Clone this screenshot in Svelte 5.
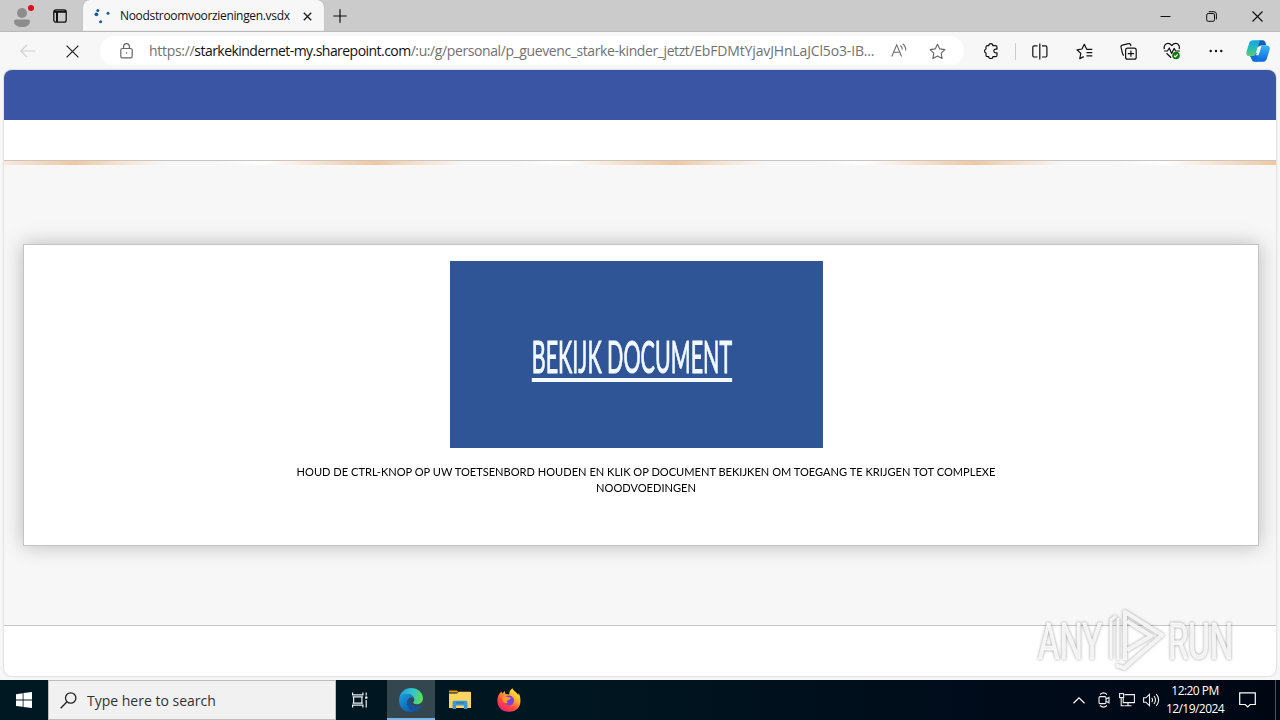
<script>
  const captions = [
    'HOUD DE CTRL-KNOP OP UW TOETSENBORD HOUDEN EN KLIK OP DOCUMENT BEKIJKEN OM TOEGANG TE KRIJGEN TOT COMPLEXE',
    'NOODVOEDINGEN'
  ];
</script>

<div class="screen">
  <header class="titlebar">
    <div class="profile">
      <svg width="36" height="32" viewBox="0 0 36 32">
        <circle cx="18" cy="13" r="5" fill="#8c8c8c" />
        <path d="M10 21.500a2 2 0 0 1 2-2h12a2 2 0 0 1 2 2c0 3.500-3.500 5.500-8 5.500s-8-2-8-5.500z" fill="#8c8c8c" />
        <circle cx="27" cy="8" r="3" fill="#e00b1c" />
      </svg>
    </div>
    <div class="workspaces">
      <svg width="14" height="14" viewBox="0 0 14 14" fill="none" stroke="#111" stroke-width="1.300">
        <rect x=".8" y=".8" width="12.400" height="12.400" rx="2.200" />
        <path d="M1 2.800h12M4 3.500V13" stroke-width="2" />
      </svg>
    </div>
    <div class="tab">
      <svg class="spinner" width="17" height="16" viewBox="0 0 17 16" fill="#1d5b9e">
        <circle cx="3.800" cy="2.600" r="1.500" /><circle cx="2.400" cy="6.300" r="1.900" />
        <circle cx="6.600" cy="13.800" r="1.500" /><circle cx="14" cy="5.200" r="1.500" />
      </svg>
      <span class="tab-title">Noodstroomvoorzieningen.vsdx</span>
      <svg class="tab-close" width="9" height="9" viewBox="0 0 9 9" stroke="#222" stroke-width="1.400"><path d="M.8.8l7.400 7.400M8.200.8L.8 8.200" /></svg>
    </div>
    <svg class="newtab" width="14" height="14" viewBox="0 0 14 14" stroke="#111" stroke-width="1.200"><path d="M.3 7h13.400M7 .3v13.400" /></svg>
    <div class="window-controls">
      <span><svg width="11" height="11" viewBox="0 0 11 11" stroke="#111"><path d="M.5 5.500h10" /></svg></span>
      <span><svg width="11" height="11" viewBox="0 0 11 11" fill="none" stroke="#111"><rect x=".7" y="2.500" width="7.800" height="7.800" rx="1.500" /><path d="M2.700.7h5.200a2.500 2.500 0 0 1 2.500 2.500v5.200" /></svg></span>
      <span><svg width="11" height="11" viewBox="0 0 11 11" stroke="#111" stroke-width="1.200"><path d="M.5.5l10 10M10.500.5l-10 10" /></svg></span>
    </div>
  </header>

  <div class="toolbar">
    <svg class="back" width="16" height="14" viewBox="0 0 16 14" fill="none" stroke="#cfcfcf" stroke-width="1.200"><path d="M.8 7h14.700M7 .8L.8 7 7 13.200" /></svg>
    <svg class="stop" width="13" height="13" viewBox="0 0 13 13" stroke="#222" stroke-width="1.200"><path d="M.6.6l11.800 11.800M12.400.6L.6 12.400" /></svg>
    <div class="address">
      <svg class="lock" width="13" height="16" viewBox="0 0 13 16" fill="none" stroke="#666" stroke-width="1.200">
        <rect x=".8" y="5.500" width="11.400" height="9.300" rx="1.600" /><path d="M3.600 5.500V3.600a2.900 2.900 0 0 1 5.800 0v1.900" /><circle cx="6.500" cy="10" r=".8" fill="#666" stroke="none" />
      </svg>
      <div class="url"><span class="u1">https://</span><span class="u2">starkekindernet-my.sharepoint.com</span><span class="u3">/:u:/g/personal/p_guevenc_starke-kinder_jetzt/</span><span class="u4">EbFDMtYjavJHnLaJCl5o3-IB...</span></div>
      <svg class="read" width="17" height="15" viewBox="0 0 17 15" fill="none" stroke="#6c6c6c" stroke-width="1.100">
        <path d="M.8 13.500L5.700 1.800l4.900 11.700M2.600 9.300h6.200M9.300 2.500c1.500 1 2 2.400 2 4M11.700.8c2.200 1.700 3.200 4 3 6.700" />
      </svg>
      <svg class="star" width="17" height="17" viewBox="0 0 17 17" fill="none" stroke="#666" stroke-width="1.100" stroke-linejoin="round">
        <path d="M8.500 1.200l2.300 4.700 5.100.7-3.700 3.600.9 5.200-4.600-2.400-4.600 2.400.9-5.200L1.100 6.600l5.100-.7z" />
      </svg>
    </div>
    <span class="tool">
      <svg width="16" height="16" viewBox="0 0 16 16" fill="none" stroke="#111" stroke-width="1.200" stroke-linejoin="round">
        <path d="M5.700 2.700a2.100 2.100 0 0 1 4.200 0h2.600q1.500 0 1.500 1.500v1.900h-1.300a1.900 1.900 0 0 0 0 3.800H14v2.300q0 1.500-1.500 1.500H9.900a2.100 1.900 0 0 1-4.200 0H4.500q-1.500 0-1.500-1.500V10a2.100 2.100 0 0 1 0-4V4.200q0-1.500 1.500-1.500z" />
      </svg>
    </span>
    <i class="divider"></i>
    <span class="tool">
      <svg width="16" height="17" viewBox="0 0 16 17" fill="none" stroke="#111" stroke-width="1.200">
        <path d="M7.800.6v15.800M5.500 2.800H2.300A1.500 1.500 0 0 0 .8 4.300v8.200A1.500 1.500 0 0 0 2.300 14h3.200M10 2.800h3.400a1.500 1.500 0 0 1 1.500 1.500v8.200a1.500 1.500 0 0 1-1.500 1.500H10" />
      </svg>
    </span>
    <span class="tool">
      <svg width="17" height="17" viewBox="0 0 17 17" fill="none" stroke="#111" stroke-width="1.200" stroke-linejoin="round">
        <path d="M16.300 6.300h-5.600L8.300 1.300 6 6 1 6.800l3.800 3.600-1 5.200 4-2M10.500 9.600h5.800M10.500 12.900h5.800" />
      </svg>
    </span>
    <span class="tool">
      <svg width="17" height="17" viewBox="0 0 17 17" fill="none" stroke="#111" stroke-width="1.200">
        <path d="M4 12.300A1.800 1.800 0 0 1 2.600 10.900L1 4.200A1.800 1.800 0 0 1 2.300 2.100L8.700.7a1.700 1.700 0 0 1 2 1.300l.2 1.200" /><rect x="5.600" y="5.200" width="10.600" height="11" rx="2" /><path d="M10.900 7.500v6.300M7.800 10.700h6.200" />
      </svg>
    </span>
    <span class="tool">
      <svg width="18" height="18" viewBox="0 0 18 18" fill="none" stroke="#111" stroke-width="1.200" stroke-linejoin="round">
        <path d="M1.300 7.200C.5 3.500 2.800 1.400 5 1.400c1.700 0 2.900 1 3.800 2.200C9.700 2.400 11 1.400 12.700 1.400c2.600 0 4.400 2.600 3.500 5.800M1 9h3.400l1.900-3 2.300 5.400 2.500-5 1.500 2.600h4.300M3.500 11.300l4.700 4.500" />
        <circle cx="13" cy="13.500" r="3.800" fill="#107c10" stroke="none" /><path d="M11.200 13.700l1.200 1.100 2.300-2.500" stroke="#fff" />
      </svg>
    </span>
    <span class="tool"><svg width="14" height="4" viewBox="0 0 14 4" fill="#111"><circle cx="1.700" cy="2" r="1.200" /><circle cx="7" cy="2" r="1.200" /><circle cx="12.300" cy="2" r="1.200" /></svg></span>
    <svg class="copilot" width="24" height="22" viewBox="0 0 24 22">
      <defs>
        <linearGradient id="cpA" x1="0" y1="0" x2="0" y2="1"><stop offset="0" stop-color="#12a5e8" /><stop offset=".55" stop-color="#2bbcb0" /><stop offset="1" stop-color="#5bcf72" /></linearGradient>
        <linearGradient id="cpB" x1="0" y1="0" x2="0" y2="1"><stop offset="0" stop-color="#38b8f2" /><stop offset="1" stop-color="#0d64e0" /></linearGradient>
      </defs>
      <path d="M13.500.2h3.300c1.500 0 2.200 1 2.600 2.300l.9 3h-5.500l-3 1.500L12 2z" fill="#135fb8" />
      <path d="M7.500.2h8.300c-1.800.2-2.500 1.500-3 3.200L9.900 13c-.6 2-1.700 3-3.600 3H3.200C.7 16-.1 14 .6 11.500L3.200 3C3.900 1 5.200.2 7.500.2z" fill="url(#cpA)" />
      <path d="M4 16h2.300c2 0 3-1 3.600-3l2.200-.8 1 1.800-2 7.700H8.200c-1.500 0-2.100-1-2.500-2.200z" fill="#0c70d8" />
      <path d="M17.500 5.600h3.400c2.400 0 3.300 1.900 2.600 4.300L20.900 18.400c-.8 2.400-2 3.400-4.400 3.400H8.300c1.700-.3 2.400-1.400 2.900-3.100L14 9c.7-2.200 1.600-3.400 3.500-3.400z" fill="url(#cpB)" />
      <path d="M13.600 6.800h1.600l-2.700 8.400h-2.600z" fill="#f7f7f7" />
    </svg>
  </div>

  <main class="page">
    <div class="bluebar"></div>
    <div class="ribbon"></div>
    <div class="progress"></div>
    <section class="canvas">
      <article class="sheet">
        <div class="banner">
          <span class="banner-text">BEKIJK DOCUMENT</span>
        </div>
        <div class="caption">
          {#each captions as line}<div>{line}</div>{/each}
        </div>
      </article>
    </section>
    <div class="statusbar"></div>
  </main>

  <footer class="taskbar">
    <div class="start"><svg width="16" height="16" viewBox="0 0 16 16" fill="#fff"><path d="M0 2.200l6.700-1v6.400H0zM7.500 1.100L16 0v7.600H7.500zM0 8.400h6.700v6.400L0 13.900zM7.500 8.400H16V16l-8.500-1.100z" /></svg></div>
    <div class="search">
      <svg width="17" height="17" viewBox="0 0 17 17" fill="none" stroke="#222" stroke-width="1.300"><circle cx="10.700" cy="6" r="5.200" /><path d="M7 9.800L.7 16.200" /></svg>
      <span>Type here to search</span>
    </div>
    <div class="taskview">
      <svg width="17" height="16" viewBox="0 0 17 16" fill="none" stroke="#e8eef0" stroke-width="1.200"><path d="M.6.500v2.300h10.300V.5M.6 15.500v-2.300h10.300v2.300M1.600 4.800v6.400M9.900 4.800v6.400M.6 4.800h10.300M.6 11.200h10.300M14.200.5v3M14.200 8v7.500" /><rect x="13.200" y="4.500" width="2.200" height="2.200" fill="#fff" stroke="none" /></svg>
    </div>
    <div class="app active">
      <svg width="24" height="24" viewBox="0 0 24 24">
        <defs>
          <linearGradient id="edA" x1="0" y1=".3" x2="1" y2=".5"><stop offset="0" stop-color="#1b9de0" /><stop offset=".5" stop-color="#2fc5d0" /><stop offset="1" stop-color="#5fdc58" /></linearGradient>
          <linearGradient id="edB" x1="0" y1="0" x2=".8" y2="1"><stop offset="0" stop-color="#1c9fe4" /><stop offset="1" stop-color="#0e59a8" /></linearGradient>
        </defs>
        <path d="M.1 11.500C.7 4.600 5.600 0 12 0c7 0 12 4.900 12 10.200 0 3.500-2.600 6-6 6-2.300 0-3.800-.8-3.800-1.700 0-.7 1.100-1 1.100-2.700C15.300 8.500 12 6 8.200 6 4.400 6 1.200 8.200.1 11.500z" fill="url(#edA)" />
        <path d="M.1 11.500C1 8.200 4.300 6 8.200 6c3.300 0 6.500 2 7 5-1-1.200-2.400-1.600-3.900-1.300C9 10.500 7.800 13 8.300 16c.6 3.700 3.400 6.300 6.800 7.400C7 25.900-.5 20 .1 11.500z" fill="url(#edB)" />
        <path d="M11 9.900C7.800 12 7.200 16 9.500 19.500c1.600 2.400 3.900 3.600 6.400 3.800 2.900-1 5.200-2.900 6.600-5.200.3-.5-.1-.8-.6-.5-4.200 2-9.400.4-11-2.900-.8-1.700-.5-3.400.1-4.800z" fill="#1155a2" />
      </svg>
    </div>
    <div class="app">
      <svg width="22" height="20" viewBox="0 0 22 20"><path d="M0 1.500Q0 .5 1 .5h7L10 2.500H0z" fill="#e59a16" /><path d="M0 3.500h8L10 1.800h11q1 0 1 1V18H0z" fill="#fcd462" /><path d="M3.500 19v-6.300q0-1.900 1.900-1.900h11.200q1.900 0 1.900 1.900V19h-3.600v-3.600H7.100V19z" fill="#3f98d2" /><path d="M7 12.800h8" stroke="#2475a8" /></svg>
    </div>
    <div class="app">
      <svg width="24" height="24" viewBox="0 0 24 24">
        <defs><linearGradient id="ff" x1=".85" y1="0" x2=".2" y2="1"><stop offset="0" stop-color="#fff14a" /><stop offset=".35" stop-color="#ffb429" /><stop offset=".65" stop-color="#ff4f3c" /><stop offset="1" stop-color="#f0197e" /></linearGradient></defs>
        <path d="M2.800 5.200L4.500 3.500l.7 2.200L7.700 3l.7 3 4 .4C12 3.700 13.500 1.500 15.600.3c.4 2.800 4.200 3.700 5.500 6.700.5-.7.600-1.400.6-1.900 3.800 7.900 1.900 18.500-9.500 18.700C4.500 23.900.3 18.700.4 12.500.5 9.300 1.300 7 2.800 5.200z" fill="url(#ff)" />
        <circle cx="12" cy="12.500" r="5" fill="#7d40dc" /><path d="M5 9.500c2.500-2 4-.3 6.500-.3 1.800 0 2.700.7 1.700 1.900-1 1-2.800.9-3.200 2.100-.3 1 .3 1.500 1 1.800-3 1-5.500-.8-6-5.500z" fill="#ff9a2c" />
      </svg>
    </div>
    <div class="tray">
      <svg class="chev" width="12" height="7" viewBox="0 0 12 7" fill="none" stroke="#fff" stroke-width="1.200"><path d="M.5 6.300L6 .9l5.500 5.400" /></svg>
      <svg class="cam" width="12" height="16" viewBox="0 0 12 16" fill="none" stroke="#f0f0f0" stroke-width="1.100"><rect x="1" y="4.600" width="7" height="7" rx="1.200" /><path d="M8 7l3-1.600v5.400L8 9.200M2 2.500Q5.500-.8 9 2.500M2 13.500q3.500 3.300 7 0" /></svg>
      <svg class="net" width="16" height="14" viewBox="0 0 16 14" fill="none" stroke="#f0f0f0" stroke-width="1.100"><path d="M5.500 1.600h9.900v8H4.200V5M5.500 12.800h7M9 9.600v3.200M2.200 5v7.800h3" /><rect x=".6" y=".6" width="4" height="4" /></svg>
      <svg class="vol" width="17" height="14" viewBox="0 0 17 14" fill="none" stroke="#f0f0f0" stroke-width="1.100"><path d="M.6 4.800h2.300L6.500 1.300v11.400L2.900 9.200H.6zM8.700 4.800q1.700 2.200 0 4.400M11 3q3 4 0 8M13.300 1.200q4.700 5.800 0 11.600" /></svg>
      <div class="clock"><span class="time">12:20 PM</span><span class="date">12/19/2024</span></div>
      <svg class="note" width="17" height="16" viewBox="0 0 17 16" fill="none" stroke="#fff" stroke-width="1.200"><path d="M.7.8h15.600v11.700h-5.100L8.700 15l-2.500-2.500H.7z" /></svg>
      <i class="showdesk"></i>
    </div>
  </footer>

  <svg class="watermark" width="220" height="76" viewBox="1024 602 220 76">
    <g fill="#fff" fill-opacity=".85" stroke="#fff" stroke-opacity=".7" stroke-width="1" font-family="Roboto" font-size="50">
      <text transform="translate(1038 659) scale(.66 1)" textLength="97" lengthAdjust="spacingAndGlyphs">ANY</text>
      <text transform="translate(1168 659) scale(.66 1)" textLength="99" lengthAdjust="spacingAndGlyphs">RUN</text>
    </g>
    <g fill="none" stroke="#fff" stroke-opacity=".85" stroke-width="4" stroke-linejoin="round">
      <path d="M1125 660V612l37 23-38 33-8-3M1127 650l24-14-24-15" />
      <path d="M1111 659V620l5-4M1118 660V618" stroke-width="3" />
    </g>
  </svg>
</div>

<style>
  :global(body) { margin: 0; overflow: hidden; }
  .screen { position: relative; width: 1280px; height: 720px; display: flex; flex-direction: column; background: #f7f7f7; font-family: "Open Sans", "Noto Sans", sans-serif; color: #111; overflow: hidden; }
  svg { display: block; flex: none; }
  span { white-space: pre; }
  .titlebar { height: 32px; display: flex; align-items: center; background: #cbcbcb; flex: none; }
  .profile { width: 36px; margin-left: 4px; }
  .workspaces { margin-left: 13px; width: 30px; }
  .tab { box-sizing: border-box; width: 241px; height: 32px; display: flex; align-items: center; background: #f7f7f7; border-radius: 7px 7px 0 0; padding-left: 11px; box-shadow: 0 0 1px #999; }
  .tab-title { width: 183px; margin-left: 9px; font-size: 12px; line-height: 20px; letter-spacing: -.33px; }
  .newtab { margin-left: 9px; }
  .window-controls { margin-left: auto; display: flex; }
  .window-controls span { width: 46px; display: flex; justify-content: center; }
  .toolbar { height: 38px; display: flex; align-items: center; flex: none; box-shadow: 0 -1px 1px #bbb; background: #f7f7f7; }
  .back { margin-left: 20px; }
  .stop { margin-left: 30px; }
  .address { box-sizing: border-box; width: 864px; height: 30px; margin: 0 5px 0 21px; border-radius: 15px; background: #fff; display: flex; align-items: center; }
  .lock { margin-left: 20px; margin-top: -1px; }
  .url { width: 727px; margin-left: 16px; display: flex; font-size: 14px; line-height: 20px; color: #717171; }
  .u1 { letter-spacing: -.3px; }
  .u2 { color: #111; letter-spacing: -.54px; }
  .u3 { letter-spacing: -.4px; }
  .u4 { letter-spacing: -.15px; }
  .read { margin-left: 15px; margin-top: -2px; }
  .star { margin-left: 21px; }
  .tool { width: 44px; height: 38px; display: flex; align-items: center; justify-content: center; flex: none; }
  .divider { width: 1px; height: 17px; margin: 0 2px; background: #ccc; }
  .copilot { margin-left: 8px; }
  .page { width: 1272px; height: 606px; margin: 0 4px; box-sizing: border-box; border-radius: 8px; overflow: hidden; background: #f7f7f7; display: flex; flex-direction: column; box-shadow: 0 0 2px #aaa; flex: none; }
  .bluebar { height: 50px; background: #3955a3; }
  .ribbon { height: 40px; background: #fff; }
  .progress { height: 4px; border-top: 1px solid #c6c6c6; background: repeating-linear-gradient(90deg, #fff -40px, #f8dfc9 20px, #f1c79f 71px, #f8dfc9 110px, #f7f7f7 160px, #f7f7f7 210px, #fff 260px); }
  .canvas { height: 460px; box-sizing: border-box; padding: 79px 17px 0 19px; overflow: hidden; }
  .sheet { height: 302px; box-sizing: border-box; border: 1px solid #c3c3c3; background: #fff; box-shadow: 0 0 19px rgba(0,0,0,.25); padding: 16px 0 0; }
  .banner { width: 373px; height: 187px; margin-left: 426px; background: #2f5597; display: flex; justify-content: center; box-sizing: border-box; padding: 70px 9px 0 0; }
  .banner-text { display: block; height: 47px; line-height: 51px; font-family: Lato, sans-serif; font-size: 45px; color: #f2f9ff; -webkit-text-stroke: 1px #f2f9ff; transform: scaleX(.477); border-bottom: 4px solid #f2f9ff; box-sizing: content-box; align-self: flex-start; flex: none; }
  .caption { margin: 16px 0 0 222px; width: 800px; text-align: center; font-family: Lato, sans-serif; font-size: 12px; line-height: 16px; color: #000; white-space: nowrap; transform: scaleX(.923); }
  .statusbar { flex: 1; border-top: 1px solid #c6c6c6; background: #fff; }
  .taskbar { margin-top: 4px; height: 40px; display: flex; align-items: stretch; background: linear-gradient(90deg, #001821 0, #001620 45%, #000c1b 75%, #000713 100%); flex: none; }
  .start { width: 48px; display: flex; align-items: center; justify-content: center; }
  .search { box-sizing: border-box; width: 288px; border: 1px solid #bdbdbd; background: #f1f1f1; display: flex; align-items: center; padding-left: 11px; color: #333; font-size: 14px; }
  .search span { margin-left: 10px; }
  .taskview { width: 51px; display: flex; align-items: center; padding-left: 16px; box-sizing: border-box; }
  .app { box-sizing: border-box; width: 49px; display: flex; align-items: center; justify-content: center; }
  .app.active { width: 48px; background: #34474f; border-bottom: 2px solid #76b9ed; padding-top: 2px; }
  .tray { margin-left: auto; display: flex; align-items: center; }
  .cam { margin-left: 13px; }
  .net { margin-left: 9px; }
  .vol { margin-left: 8px; }
  .clock { width: 70px; display: flex; flex-direction: column; align-items: center; font-size: 12px; line-height: 18px; letter-spacing: -.55px; color: #fff; padding-bottom: 1px; }
  .note { margin-left: 9px; }
  .showdesk { width: 1px; height: 40px; background: #4a525c; margin: 0 4px 0 19px; }
  .watermark { position: absolute; left: 1024px; top: 602px; filter: drop-shadow(0 0 1.500px rgba(0,0,0,.45)); }
</style>
